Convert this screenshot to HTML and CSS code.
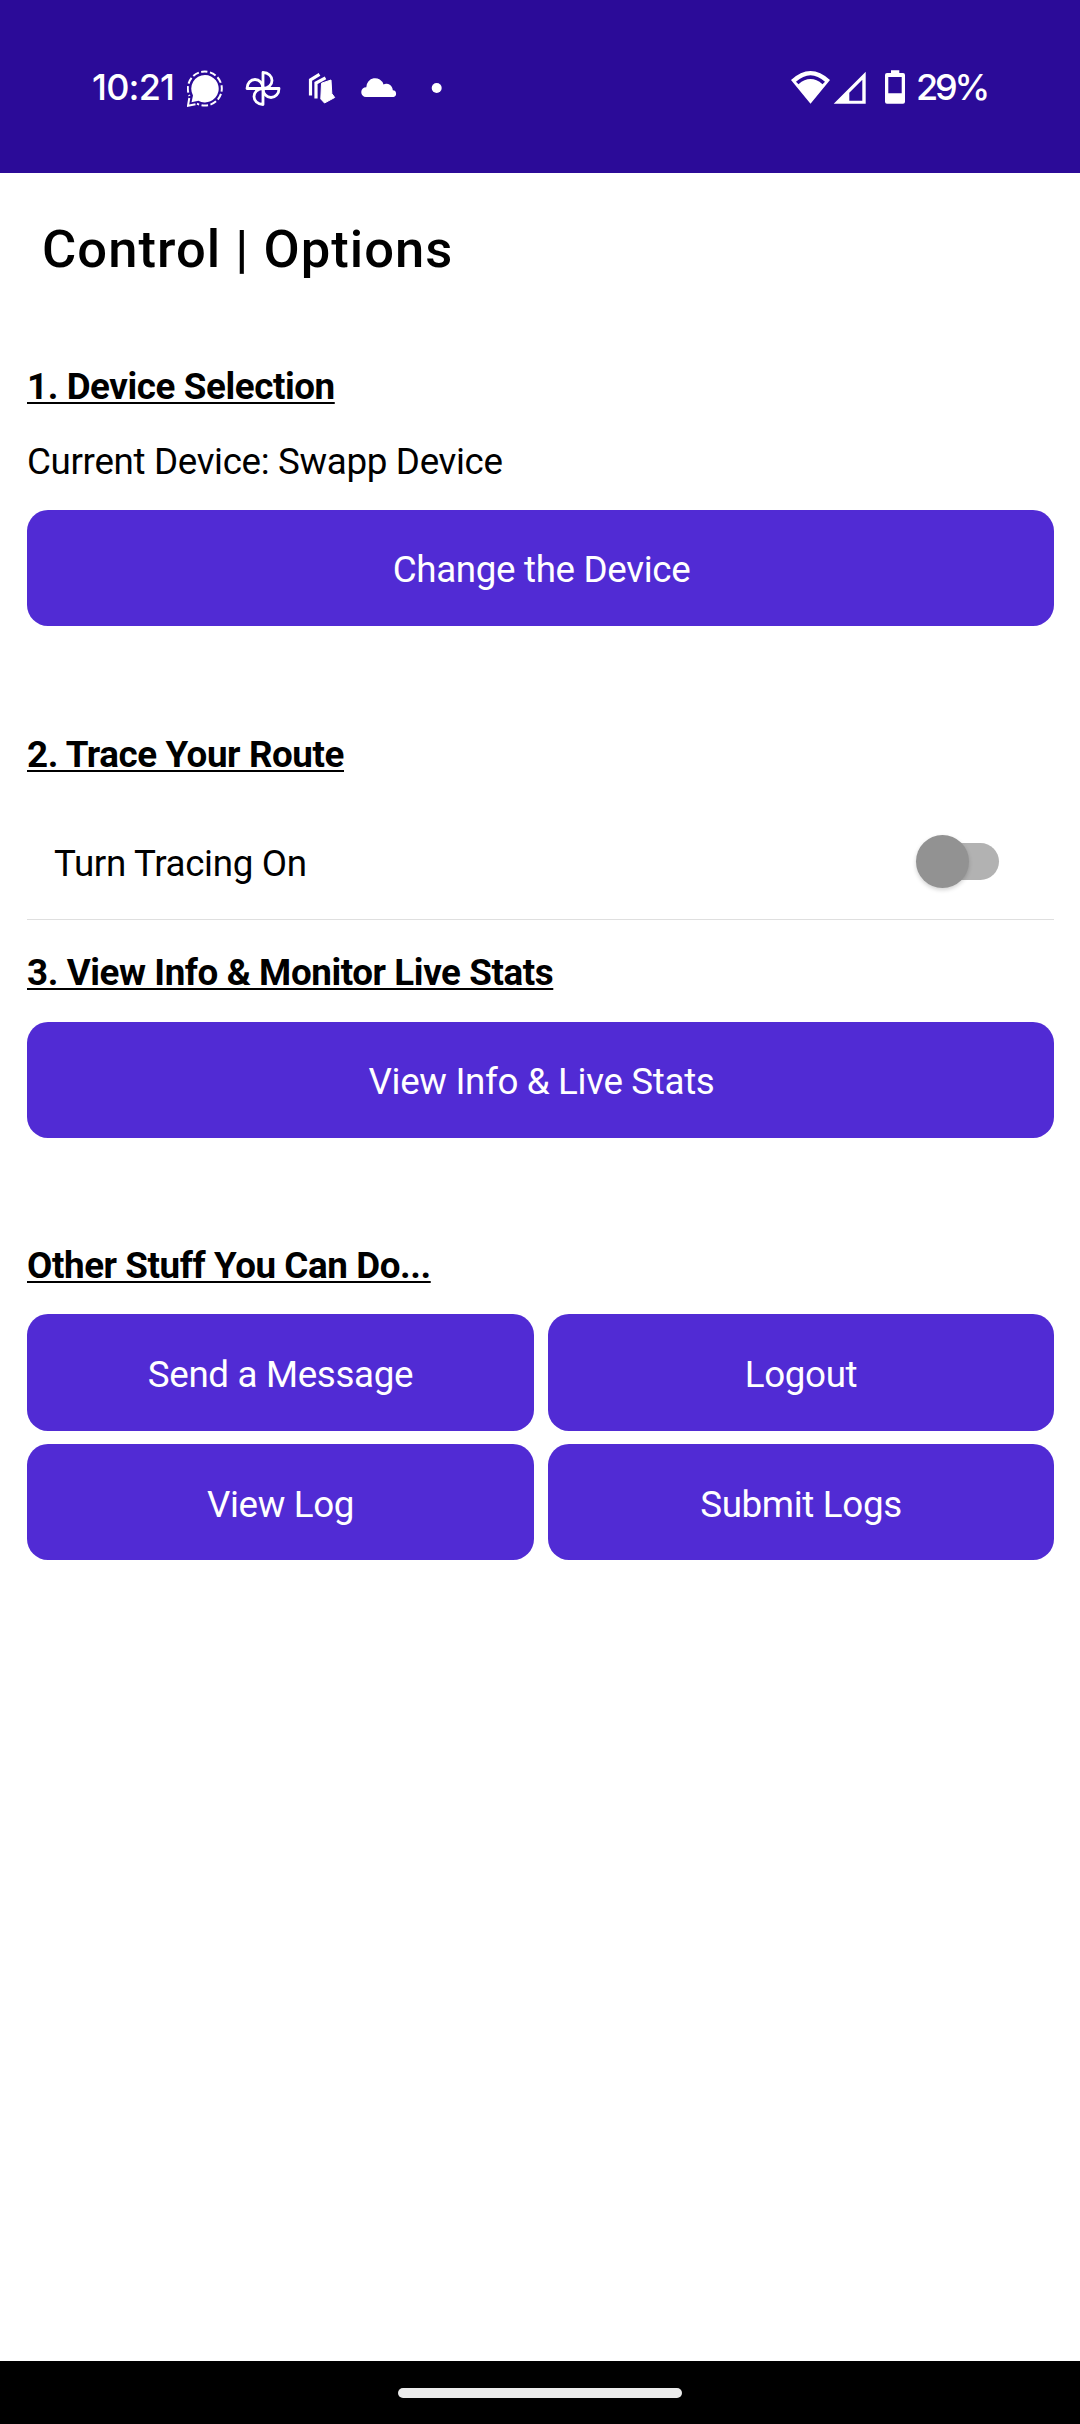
FILE: index.html
```html
<!DOCTYPE html>
<html lang="en">
<head>
    <meta charset="UTF-8">
    <meta name="viewport" content="width=device-width, initial-scale=1.0">
    <title>Control | Options</title>
    <link rel="stylesheet" href="styles.css">
</head>
<body>
<!-- Status bar -->
<div class="status-bar">
    <span class="time">10:21</span>
    <div class="notifications">
        <svg width="36" height="38" viewBox="0 0 36 38">
            <path d="M18 5a13.7 13.7 0 1 1-6.6 25.7L4.5 32.3 6 25.4A13.7 13.7 0 0 1 18 5z" fill="#fff"/>
            <path d="M10 33.7A17 17 0 1 0 2.5 26" fill="none" stroke="#fff" stroke-width="2" stroke-dasharray="6.4 2.5" stroke-dashoffset="4"/>
            <path d="M2.3 28L1 35.7 8.5 34.3" fill="none" stroke="#fff" stroke-width="2"/>
        </svg>
        <svg width="36" height="38" viewBox="0 0 36 38">
            <g fill="none" stroke="#fff" stroke-width="2.8" stroke-linejoin="round">
                <path d="M18 18.5V2.5c5.5 0 9 3.8 9 8s-3.5 8-9 8z"/>
                <path d="M18 18.5h16c0 5.5-3.8 9-8 9s-8-3.5-8-9z"/>
                <path d="M18 18.5v16c-5.5 0-9-3.8-9-8s3.5-8 9-8z"/>
                <path d="M18 18.5H2c0-5.5 3.8-9 8-9s8 3.5 8 9z"/>
            </g>
        </svg>
        <svg width="36" height="38" viewBox="0 0 36 38">
            <path d="M7.5 25.5V10L16.5 4.3M13 28.5V13L22.5 7.8" fill="none" stroke="#fff" stroke-width="3.2"/>
            <path d="M18.5 13.2L28 10l.8 13.5 2.9 4L21.5 33l-3.7-4z" fill="#fff" stroke="#fff" stroke-linejoin="round"/>
        </svg>
        <svg width="36" height="38" viewBox="0 0 36 38">
            <path d="M5 27a4.900 4.900 0 0 1 .3-9.800A8.800 8.800 0 0 1 22.500 14.400 6.600 6.600 0 0 1 31.800 20.300 3.400 3.400 0 0 1 32.500 27z" fill="#fff"/>
        </svg>
        <svg width="36" height="38" viewBox="0 0 36 38">
            <circle cx="17.7" cy="18" r="5" fill="#fff"/>
        </svg>
    </div>
    <div class="system">
        <svg width="39" height="38" viewBox="0 0 39 38">
            <path d="M19.5 33.7L0 10Q19.5-8 39 10zM5 11.8L7.500 14.200Q19.500 4 31.500 14.200L34 11.800Q19.500-1.500 5 11.800z" fill="#fff" fill-rule="evenodd"/>
        </svg>
        <svg class="cell" width="33" height="38" viewBox="0 0 33 38">
            <path d="M.7 33.7L32.7 1.7v32zM16.3 30.7h13V9.7l-13 13z" fill="#fff" fill-rule="evenodd"/>
        </svg>
        <svg class="battery" width="20" height="38" viewBox="0 0 20 38">
            <path d="M6 .3h8.3V3H18a2 2 0 0 1 2 2v26.7a2 2 0 0 1-2 2H2a2 2 0 0 1-2-2V5a2 2 0 0 1 2-2h4zM3.3 7v16.3h13.4V7z" fill="#fff" fill-rule="evenodd"/>
        </svg>
        <span class="percent">29%</span>
    </div>
</div>

<h1 class="title">Control | Options</h1>

<main>
    <section class="device">
        <h2>1. Device Selection</h2>
        <p>Current Device: Swapp Device</p>
        <button class="btn">Change the Device</button>
    </section>

    <section class="trace">
        <h2>2. Trace Your Route</h2>
        <div class="switch-row">
            <span>Turn Tracing On</span>
            <div class="switch"><div class="thumb"></div></div>
        </div>
    </section>

    <section class="stats">
        <h2>3. View Info &amp; Monitor Live Stats</h2>
        <button class="btn">View Info &amp; Live Stats</button>
    </section>

    <section class="other">
        <h2>Other Stuff You Can Do...</h2>
        <div class="btn-grid">
            <button class="btn">Send a Message</button>
            <button class="btn">Logout</button>
            <button class="btn">View Log</button>
            <button class="btn">Submit Logs</button>
        </div>
    </section>
</main>

<!-- Gesture navigation -->
<div class="nav-bar"><div class="pill"></div></div>
</body>
</html>
```
FILE: styles.css
```css
* {
    box-sizing: border-box;
}

body {
    margin: 0;
    height: 2424px;
    display: flex;
    flex-direction: column;
    background-color: #fff;
    color: #000;
    font-family: Roboto, sans-serif;
    font-size: 36.75px;
    line-height: 43px;
    letter-spacing: -0.34px;
}

/* Status bar */
.status-bar {
    display: flex;
    align-items: flex-start;
    height: 173px;
    padding: 70px 92px 0 92px;
    background-color: #2b0b98;
    color: #fff;
    font-family: Inter, sans-serif;
    font-size: 36px;
    font-weight: 500;
    line-height: 35px;
}

.status-bar svg {
    display: block;
    flex: none;
}

.time {
    width: 95px;
    letter-spacing: -0.8px;
    white-space: nowrap;
}

.notifications {
    display: flex;
    gap: 22px;
}

.system {
    display: flex;
    margin-left: auto;
}

.cell {
    margin-left: 3px;
}

.battery {
    margin: 0 11px 0 19px;
}

.percent {
    width: 72px;
    letter-spacing: -3.2px;
    white-space: nowrap;
}

.title {
    margin: 0;
    padding: 45px 42px 0;
    height: 192px;
    font-size: 52.5px;
    font-weight: 500;
    line-height: 62px;
    letter-spacing: 1.05px;
}

/* Content */
main {
    flex: 1;
    padding: 0 26px 0 27px;
}

h2 {
    margin: 0;
    font-size: 36.75px;
    font-weight: 700;
    letter-spacing: -0.41px;
    text-decoration: underline;
    text-decoration-thickness: 2px;
    text-underline-offset: 3px;
}

p {
    margin: 32px 0 0;
}

.btn {
    display: block;
    width: 100%;
    height: 116px;
    margin: 0;
    padding: 2px 0 0 2px;
    border: none;
    border-radius: 21px;
    background-color: #512bd4;
    color: #fff;
    font: inherit;
    letter-spacing: inherit;
}

.device .btn {
    margin-top: 27px;
}

.stats .btn {
    margin-top: 28px;
}

.trace {
    margin-top: 107px;
}

.switch-row {
    display: flex;
    justify-content: space-between;
    align-items: center;
    height: 144px;
    padding: 32px 55px 0 27px;
    border-bottom: 1px solid #dfdfdf;
}

.switch {
    display: flex;
    align-items: center;
    width: 75px;
    height: 37px;
    margin-top: -4px;
    border-radius: 19px;
    background-color: #b2b2b2;
}

.thumb {
    width: 53px;
    height: 53px;
    margin-left: -8px;
    border-radius: 50%;
    background-color: #929292;
    box-shadow: 0 2px 4px rgba(0, 0, 0, 0.18);
}

.stats {
    margin-top: 31px;
}

.other {
    margin-top: 106px;
}

.btn-grid {
    display: grid;
    grid-template-columns: 507px 506px;
    grid-template-rows: 117px 116px;
    gap: 13px 14px;
    margin-top: 27px;
}

.btn-grid .btn {
    height: 100%;
    padding: 4px 0 0;
}

/* Navigation bar */
.nav-bar {
    display: flex;
    justify-content: center;
    align-items: center;
    height: 63px;
    padding-top: 1px;
    background-color: #000;
}

.pill {
    width: 284px;
    height: 10px;
    border-radius: 5px;
    background-color: #ebebeb;
}
```
